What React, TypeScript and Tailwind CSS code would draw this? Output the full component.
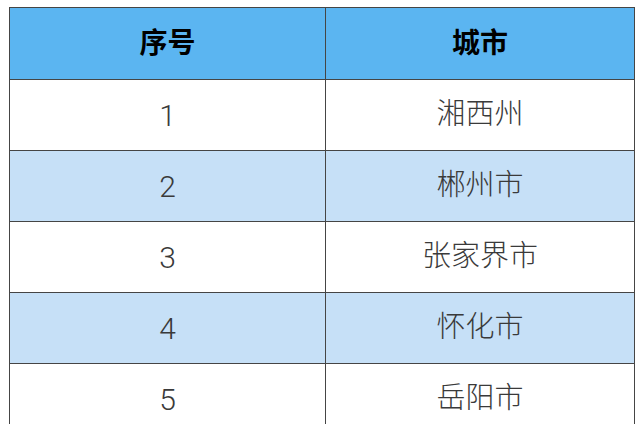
import React from "react";

const rows = [
  ["1", "湘西州"],
  ["2", "郴州市"],
  ["3", "张家界市"],
  ["4", "怀化市"],
  ["5", "岳阳市"],
];

export default function App() {
  return (
    <div
      className="w-[644px] h-[424px] overflow-hidden bg-white pt-[7px] pl-[9px]"
      style={{ fontFamily: '"Roboto", "Noto Sans CJK SC", sans-serif' }}
    >
      <table className="border-collapse w-[625px] table-fixed">
        <colgroup>
          <col className="w-[316px]" />
          <col className="w-[309px]" />
        </colgroup>
        <thead>
          <tr className="bg-[#5bb5f1] h-[72px]">
            <th className="border-[1.5px] border-[#454545] text-[28px] font-bold text-black text-center">
              序号
            </th>
            <th className="border-[1.5px] border-[#454545] text-[28px] font-bold text-black text-center">
              城市
            </th>
          </tr>
        </thead>
        <tbody>
          {rows.map(([n, c], i) => (
            <tr
              key={n}
              className={`h-[71px] ${i % 2 === 1 ? "bg-[#c6e0f7]" : "bg-white"}`}
            >
              <td className="border-[1.5px] border-[#454545] text-[30px] font-light text-[#3a3a3a] text-center">
                {n}
              </td>
              <td className="border-[1.5px] border-[#454545] text-[29px] font-light text-[#3a3a3a] text-center">
                {c}
              </td>
            </tr>
          ))}
        </tbody>
      </table>
    </div>
  );
}
